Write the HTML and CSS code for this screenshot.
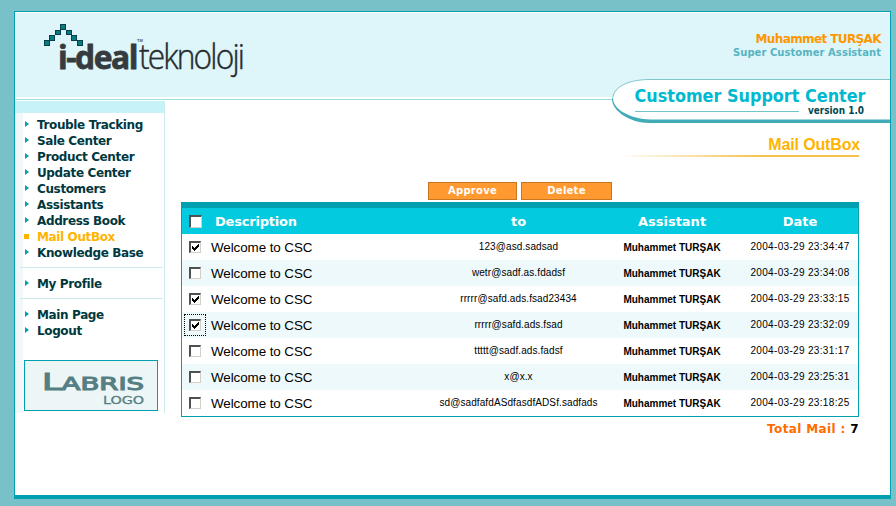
FILE: index.html
```html
<!DOCTYPE html>
<html lang="en">
<head>
<meta charset="utf-8">
<title>Customer Support Center</title>
<link rel="stylesheet" href="styles.css">
</head>
<body>
<div class="frame">
  <header class="header">
    <svg class="logo" width="212" height="62" viewBox="0 0 212 62" role="img" aria-label="i-deal teknoloji">
      <g fill="#087a84" stroke="#063f48" stroke-width="1">
        <rect x="20.500" y="1.500" width="5" height="5"/><rect x="15.500" y="7.500" width="5" height="4"/><rect x="26.500" y="7.500" width="5" height="4"/>
        <rect x="9.500" y="12.500" width="5" height="5"/><rect x="31.500" y="12.500" width="5" height="5"/><rect x="4.500" y="17.500" width="5" height="5"/><rect x="37.500" y="17.500" width="5" height="5"/>
      </g>
      <text class="logo-bold" x="18" y="46" textLength="79" lengthAdjust="spacingAndGlyphs">i-deal</text>
      <text class="logo-tm" x="97" y="19">TM</text>
      <text class="logo-light" x="99" y="46" textLength="104" lengthAdjust="spacingAndGlyphs">teknoloji</text>
    </svg>
    <div class="user">
      <div class="user-name">Muhammet TURŞAK</div>
      <div class="user-role">Super Customer Assistant</div>
    </div>
    <svg class="banner" width="279" height="46" viewBox="0 0 279 46">
      <path d="M280 1.500H39C21 1.500 2.500 6 2.500 22C2.500 33 19 43 38 43H280Z" fill="#fff"/>
      <path d="M280 1.500H39C19 1.500 1.500 8 1.500 22" fill="none" stroke="#7fc5cb"/>
      <path d="M1 21C1 33 19 45 38 45H280V41.500H39C22 41 3 33 2 21Z" fill="#41abb7"/>
      <path d="M24 33.500H188" stroke="#72c4cb"/>
      <text class="banner-title" x="23.500" y="24" textLength="231" lengthAdjust="spacingAndGlyphs">Customer Support Center</text>
      <text class="banner-version" x="197" y="36" textLength="56" lengthAdjust="spacingAndGlyphs">version 1.0</text>
    </svg>
  </header>
  <div class="body">
    <nav class="sidebar">
      <ul class="menu">
        <li>Trouble Tracking</li>
        <li>Sale Center</li>
        <li>Product Center</li>
        <li>Update Center</li>
        <li>Customers</li>
        <li>Assistants</li>
        <li>Address Book</li>
        <li class="active">Mail OutBox</li>
        <li>Knowledge Base</li>
      </ul>
      <ul class="menu profile"><li>My Profile</li></ul>
      <ul class="menu exit"><li>Main Page</li><li>Logout</li></ul>
      <div class="partner">
        <svg width="132" height="49" viewBox="0 0 132 49">
          <text class="labris" x="17" y="29" textLength="102" lengthAdjust="spacingAndGlyphs"><tspan class="labris-cap">L</tspan>ABRIS</text>
          <text class="labris-sub" x="78" y="43" textLength="41" lengthAdjust="spacingAndGlyphs">LOGO</text>
        </svg>
      </div>
    </nav>
    <main class="main">
      <h1 class="title">Mail OutBox</h1>
      <div class="rule"></div>
      <div class="actions"><button class="btn">Approve</button><button class="btn wide">Delete</button></div>
      <div class="table">
        <div class="row head"><i class="box"></i><span class="desc">Description</span><span>to</span><span>Assistant</span><span>Date</span></div>
        <div class="row"><i class="box on"></i><span class="desc">Welcome to CSC</span><span class="to">123@asd.sadsad</span><b>Muhammet TURŞAK</b><span class="date">2004-03-29 23:34:47</span></div>
        <div class="row"><i class="box"></i><span class="desc">Welcome to CSC</span><span class="to">wetr@sadf.as.fdadsf</span><b>Muhammet TURŞAK</b><span class="date">2004-03-29 23:34:08</span></div>
        <div class="row"><i class="box on"></i><span class="desc">Welcome to CSC</span><span class="to">rrrrr@safd.ads.fsad23434</span><b>Muhammet TURŞAK</b><span class="date">2004-03-29 23:33:15</span></div>
        <div class="row"><i class="box on focus"></i><span class="desc">Welcome to CSC</span><span class="to">rrrrr@safd.ads.fsad</span><b>Muhammet TURŞAK</b><span class="date">2004-03-29 23:32:09</span></div>
        <div class="row"><i class="box"></i><span class="desc">Welcome to CSC</span><span class="to">ttttt@sadf.ads.fadsf</span><b>Muhammet TURŞAK</b><span class="date">2004-03-29 23:31:17</span></div>
        <div class="row"><i class="box"></i><span class="desc">Welcome to CSC</span><span class="to">x@x.x</span><b>Muhammet TURŞAK</b><span class="date">2004-03-29 23:25:31</span></div>
        <div class="row"><i class="box"></i><span class="desc">Welcome to CSC</span><span class="to">sd@sadfafdASdfasdfADSf.sadfads</span><b>Muhammet TURŞAK</b><span class="date">2004-03-29 23:18:25</span></div>
      </div>
      <div class="total">Total Mail : <em>7</em></div>
    </main>
  </div>
</div>
<script src="checks.js"></script>
</body>
</html>
```
FILE: checks.js
```js
// Draws the tick inside every selected checkbox.
document.querySelectorAll('.box.on').forEach(function (box) {
  box.innerHTML = '<svg width="7" height="7" viewBox="0 0 7 7" shape-rendering="crispEdges"><path d="M0 2h1v1h1v1h1v-1h1v-1h1v-1h1v-1h1v3h-1v1h-1v1h-1v1h-1v1h-1v-1h-1v-1h-1z"/></svg>';
});
```
FILE: styles.css
```css
* { box-sizing: border-box; }
body {
  margin: 0;
  height: 506px;
  overflow: hidden;
  padding: 11px 5px 0 14px;
  background: #79c1c8;
  font-family: "DejaVu Sans", sans-serif;
}
.frame {
  height: 488px;
  border: 1px solid #00a0b0;
  border-bottom-width: 4px;
  background: #fff;
}
.header {
  position: relative;
  height: 88px;
  border-top: 1px solid #fff;
  border-left: 1px solid #fff;
  border-bottom: 1px solid #9adfe3;
  padding: 10px 9px 0 24px;
  display: flex;
  justify-content: space-between;
  background: linear-gradient(#def6fa 84px, #fff 84px);
}
.logo { overflow: visible; }
.logo-bold { font: bold 33px "Open Sans", sans-serif; letter-spacing: -1.5px; fill: #353b3e; stroke: #353b3e; stroke-width: .8; }
.logo-light { font: 300 34px "Open Sans", sans-serif; letter-spacing: -2px; fill: #252b2e; stroke: #252b2e; stroke-width: .4; }
.logo-tm { font: bold 4px "Liberation Sans", sans-serif; fill: #555; }
.user { text-align: right; padding-top: 8px; font-weight: bold; white-space: nowrap; }
.user-name { font-size: 12px; line-height: 16px; letter-spacing: -.6px; color: #ff9600; }
.user-role { font-size: 10px; line-height: 12px; letter-spacing: .05px; color: #57b4c1; }
.banner { position: absolute; right: 0; top: 65px; }
.banner-title { font: bold 18.5px "DejaVu Sans", sans-serif; fill: #00b8cf; }
.banner-version { font: bold 10px "DejaVu Sans", sans-serif; fill: #004850; }
.body { display: flex; padding-top: 1px; }
.sidebar {
  flex: none;
  width: 150px;
  height: 312px;
  border-top: 12px solid #c7f3f8;
  border-right: 1px solid #cdebee;
  background: linear-gradient(90deg, #f2f7f9 8px, #fff 8px);
  padding-top: 4px;
}
.menu {
  list-style: none;
  margin: 0 1px 0 5px;
  padding: 0 0 6px 17px;
  font-weight: bold;
  font-size: 12px;
  line-height: 16px;
  letter-spacing: -.37px;
  color: #003840;
  white-space: nowrap;
}
.profile { border: solid #cdebee; border-width: 1px 0; padding-top: 8px; padding-bottom: 6px; }
.exit { padding-top: 8px; padding-bottom: 21px; }
.menu li { display: flex; align-items: center; }
.menu li::before {
  content: "";
  width: 4px;
  height: 6px;
  margin: -2px 8px 0 -12px;
  background: #00a0b0;
  clip-path: polygon(0 0, 100% 50%, 0 100%);
}
.menu li.active { color: #ffb400; }
.menu li.active::before { width: 5px; height: 5px; margin: -1px 8px 0 -13px; clip-path: none; background: #ffb400; }
.partner { width: 134px; height: 51px; margin-left: 9px; border: 1px solid #00a0b0; background: #edf6f7; }
.partner svg { display: block; }
.labris { font: 18px "DejaVu Sans", sans-serif; fill: #567f84; stroke: #567f84; stroke-width: 1.1; }
.labris-cap { font-size: 23px; }
.labris-sub { font: 11px "DejaVu Sans", sans-serif; fill: #567f84; stroke: #567f84; stroke-width: .3; }
.main { flex: 1; padding: 34px 31px 0 16px; }
.title { margin: 0 -1px 0 0; font: bold 16px/20px "Liberation Sans", sans-serif; letter-spacing: -.15px; color: #ffb400; text-align: right; }
.rule { width: 239px; height: 2px; margin-left: auto; background: linear-gradient(90deg, #fff, #f4c14a 60%); }
.actions { display: flex; gap: 4px; margin: 25px 0 2px 247px; }
.btn {
  width: 89px;
  height: 18px;
  padding: 0;
  border: 1px solid #c87820;
  background: #ff9930;
  color: #fff;
  font: bold 10px/16px "DejaVu Sans", sans-serif;
  letter-spacing: .25px;
}
.btn.wide { width: 91px; }
.table { border: solid #00a0b0; border-width: 6px 1px 1px; color: #000; }
.row {
  display: grid;
  grid-template-columns: 26px 227px 167px 140px 116px;
  align-items: center;
  height: 26px;
  text-align: center;
  white-space: nowrap;
  font-family: "Liberation Sans", sans-serif;
  font-size: 10px;
}
.row:nth-child(odd) { background: #edf9fa; }
.row.head { background: #04cae0; color: #fff; font: bold 13px "DejaVu Sans", sans-serif; }
.row .desc { text-align: left; padding-left: 3px; font-size: 13.4px; letter-spacing: -.08px; }
.row.head .desc { font-size: 13px; letter-spacing: -.2px; padding-left: 7px; }
.to { position: relative; top: -1px; letter-spacing: .1px; }
.date { position: relative; top: -1px; letter-spacing: .33px; }
.box {
  width: 12px;
  height: 12px;
  margin-left: 7px;
  border: 2px solid #505050;
  border-width: 2px 1px 1px 2px;
  border-right-color: #d4d0c8;
  border-bottom-color: #d4d0c8;
  background: #fff;
  display: flex;
  align-items: center;
  justify-content: center;
}
.head .box { width: 13px; height: 13px; }
.row:nth-child(even) { background: #fff; }
.row:nth-child(odd):not(.head) { background: #edf9fa; }
.focus { outline: 1px dotted #000; outline-offset: 4px; }
.total { margin: 4px 0 0; text-align: right; font-size: 12px; line-height: 16px; font-weight: bold; letter-spacing: .37px; color: #ff6c00; }
.total em { font-style: normal; color: #000; }
```
